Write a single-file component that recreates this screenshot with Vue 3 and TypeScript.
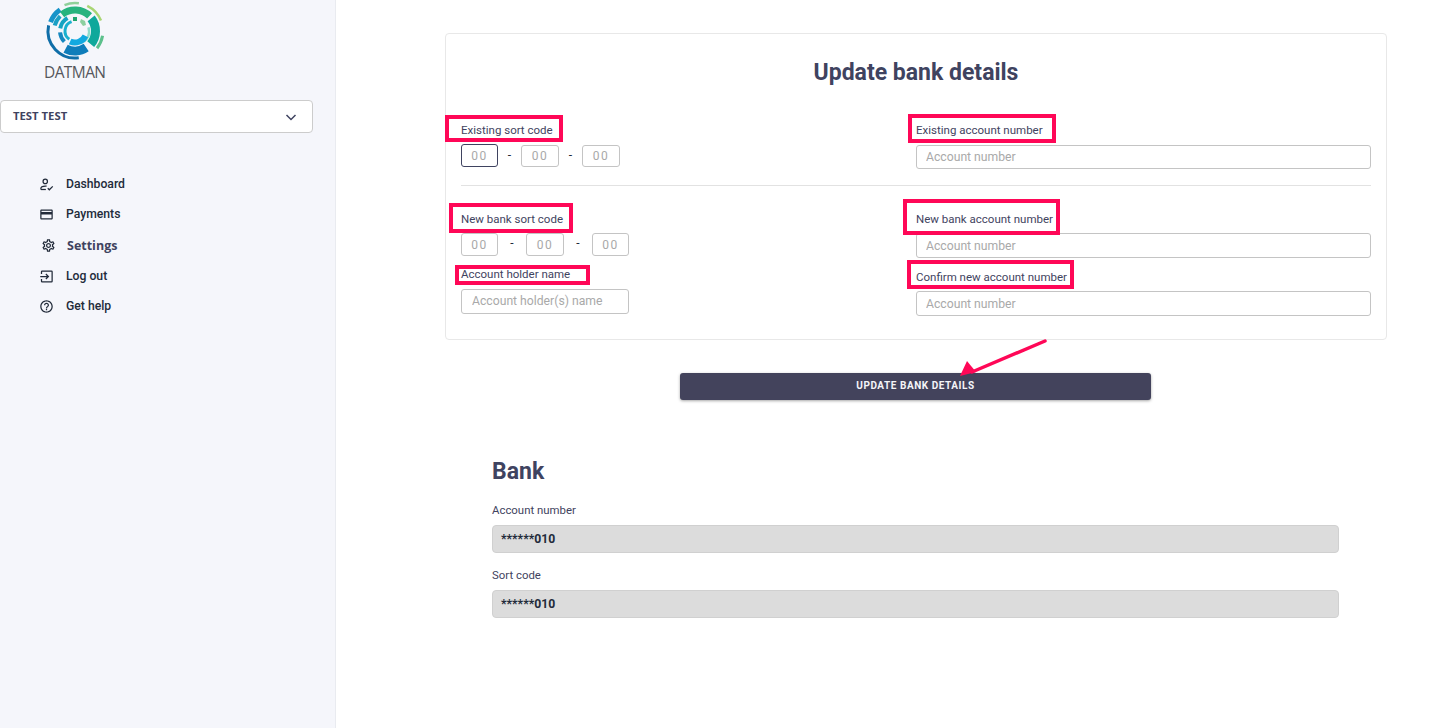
<template>
  <div class="page">
    <aside class="sidebar">
      <div class="brand">
        <svg class="logo" width="62" height="62" viewBox="-31 -31 62 62" fill="none">
          <path
            v-for="(seg, i) in logoArcs"
            :key="i"
            :d="arcPath(seg.r, seg.from, seg.to)"
            :stroke="seg.color"
            :stroke-width="seg.w"
          />
          <rect x="-2" y="-14" width="4" height="4" fill="#1fa56f" />
          <path d="M6-12l4 2 1 4-3 1-3-4z" fill="#8ccf9f" />
        </svg>
        <span class="brand-name">DATMAN</span>
      </div>

      <div class="merchant">
        <span>TEST TEST</span>
        <svg width="12" height="12" viewBox="0 0 12 12" fill="none" stroke="#3f4360" stroke-width="1.5">
          <path d="M1.5 4l4.5 4.5L10.500 4" />
        </svg>
      </div>

      <nav class="nav">
        <a class="nav-item">
          <svg class="nav-icon" viewBox="0 0 24 24" fill="none" stroke="#222b3a" stroke-width="2">
            <circle cx="10" cy="7" r="3.500" />
            <path d="M3 20v-1.500c0-2.500 3.500-4 7-4 .8 0 1.500.1 2.200.2" />
            <path d="M3 20h8" />
            <path d="M14 18l2.500 2.500L22 15" />
          </svg>
          <span>Dashboard</span>
        </a>
        <a class="nav-item">
          <svg class="nav-icon" viewBox="0 0 24 24" fill="#222b3a">
            <path d="M20 4H4c-1.110 0-1.990.89-1.990 2L2 18c0 1.110.89 2 2 2h16c1.110 0 2-.89 2-2V6c0-1.110-.89-2-2-2zm0 14H4v-6h16v6zm0-10H4V6h16v2z" />
          </svg>
          <span>Payments</span>
        </a>
        <a class="nav-item active">
          <svg class="nav-icon" viewBox="0 0 24 24" fill="#222b3a">
            <path d="M19.430 12.980c.04-.32.07-.64.07-.98 0-.34-.03-.66-.07-.98l2.110-1.650c.19-.15.24-.42.12-.64l-2-3.460c-.09-.16-.26-.25-.44-.25-.06 0-.12.01-.17.03l-2.490 1c-.52-.4-1.080-.73-1.690-.98l-.38-2.650C14.460 2.180 14.250 2 14 2h-4c-.25 0-.46.18-.49.42l-.38 2.650c-.61.25-1.170.59-1.690.98l-2.490-1c-.06-.02-.12-.03-.18-.03-.17 0-.34.09-.43.25l-2 3.460c-.13.22-.07.49.12.64l2.110 1.650c-.04.32-.07.65-.07.98 0 .33.03.66.07.98l-2.110 1.650c-.19.15-.24.42-.12.64l2 3.460c.09.16.26.25.44.25.06 0 .12-.01.17-.03l2.490-1c.52.4 1.080.73 1.690.98l.38 2.650c.03.24.24.42.49.42h4c.25 0 .46-.18.49-.42l.38-2.650c.61-.25 1.170-.59 1.690-.98l2.490 1c.06.02.12.03.18.03.17 0 .34-.09.43-.25l2-3.460c.12-.22.07-.49-.12-.64l-2.110-1.650zm-1.980-1.710c.04.31.05.52.05.73 0 .21-.02.43-.05.73l-.14 1.130.89.7 1.080.84-.7 1.210-1.270-.51-1.040-.42-.9.68c-.43.32-.84.56-1.250.73l-1.060.43-.16 1.130-.2 1.350h-1.400l-.19-1.350-.16-1.130-1.060-.43c-.43-.18-.83-.41-1.230-.71l-.91-.7-1.060.43-1.270.51-.7-1.210 1.080-.84.89-.7-.14-1.130c-.03-.31-.05-.54-.05-.74s.02-.43.05-.73l.14-1.130-.89-.7-1.080-.84.7-1.210 1.270.51 1.040.42.9-.68c.43-.32.84-.56 1.250-.73l1.060-.43.16-1.130.2-1.350h1.390l.19 1.350.16 1.130 1.060.43c.43.18.83.41 1.230.71l.91.7 1.060-.43 1.270-.51.7 1.210-1.070.85-.89.7.14 1.130zM12 8c-2.210 0-4 1.790-4 4s1.790 4 4 4 4-1.790 4-4-1.790-4-4-4zm0 6c-1.100 0-2-.9-2-2s.9-2 2-2 2 .9 2 2-.9 2-2 2z" />
          </svg>
          <span>Settings</span>
        </a>
        <a class="nav-item">
          <svg class="nav-icon" viewBox="0 0 24 24" fill="none" stroke="#222b3a" stroke-width="2">
            <path d="M4 8V4.500a1 1 0 0 1 1-1h15a1 1 0 0 1 1 1v15a1 1 0 0 1-1 1H5a1 1 0 0 1-1-1V16" />
            <path d="M2 12h13M11 8l4 4-4 4" />
          </svg>
          <span>Log out</span>
        </a>
        <a class="nav-item">
          <svg class="nav-icon" viewBox="0 0 24 24" fill="#222b3a">
            <path d="M11 18h2v-2h-2v2zm1-16C6.480 2 2 6.480 2 12s4.480 10 10 10 10-4.480 10-10S17.520 2 12 2zm0 18c-4.410 0-8-3.590-8-8s3.590-8 8-8 8 3.590 8 8-3.590 8-8 8zm0-14c-2.210 0-4 1.790-4 4h2c0-1.100.9-2 2-2s2 .9 2 2c0 2-3 1.750-3 5h2c0-2.250 3-2.500 3-5 0-2.210-1.790-4-4-4z" />
          </svg>
          <span>Get help</span>
        </a>
      </nav>
    </aside>

    <main class="content">
      <section class="card">
        <h1 class="title">Update bank details</h1>

        <div class="row first">
          <div>
            <label class="label">Existing sort code</label>
            <div class="sort">
              <input class="code focused" placeholder="00" />
              <span class="dash">-</span>
              <input class="code" placeholder="00" />
              <span class="dash">-</span>
              <input class="code" placeholder="00" />
            </div>
          </div>
          <div>
            <label class="label">Existing account number</label>
            <input class="text slim" placeholder="Account number" />
          </div>
        </div>

        <hr class="divider" />

        <div class="row">
          <div>
            <label class="label tight">New bank sort code</label>
            <div class="sort wide">
              <input class="code narrow" placeholder="00" />
              <span class="dash">-</span>
              <input class="code" placeholder="00" />
              <span class="dash">-</span>
              <input class="code narrow" placeholder="00" />
            </div>
            <label class="label holder">Account holder name</label>
            <input class="text short" placeholder="Account holder(s) name" />
          </div>
          <div>
            <label class="label tight">New bank account number</label>
            <input class="text" placeholder="Account number" />
            <label class="label confirm tight">Confirm new account number</label>
            <input class="text" placeholder="Account number" />
          </div>
        </div>

        <!-- review annotations drawn over the form -->
        <i class="mark m1"></i>
        <i class="mark m2"></i>
        <i class="mark m3"></i>
        <i class="mark m4"></i>
        <i class="mark m5"></i>
        <i class="mark m6"></i>
      </section>

      <div class="action">
        <button class="submit">UPDATE BANK DETAILS</button>
        <svg class="arrow" width="90" height="42" viewBox="0 0 90 42" fill="none">
          <path d="M85 2 L12 33" stroke="#ff0757" stroke-width="3.500" stroke-linecap="round" />
          <path d="M0 37 L7 22 L16 33 Z" fill="#ff0757" />
        </svg>
      </div>

      <section class="bank">
        <h2 class="bank-title">Bank</h2>
        <div class="bank-label">Account number</div>
        <div class="bank-value">******010</div>
        <div class="bank-label">Sort code</div>
        <div class="bank-value">******010</div>
      </section>
    </main>
  </div>
</template>

<script setup lang="ts">
interface LogoArc {
  r: number
  from: number
  to: number
  w: number
  color: string
}

const logoArcs: LogoArc[] = [
  { r: 28, from: -22, to: 8, w: 2.5, color: "#8fd09a" },
  { r: 28, from: 26, to: 68, w: 2.5, color: "#a9d574" },
  { r: 28, from: 100, to: 128, w: 3, color: "#5cc08c" },
  { r: 27, from: 172, to: 282, w: 3, color: "#0f6ea8" },
  { r: 26, from: 290, to: 325, w: 5, color: "#1693c9" },
  { r: 21, from: -38, to: 44, w: 7, color: "#27b37e" },
  { r: 20.5, from: 52, to: 130, w: 9, color: "#0fa89b" },
  { r: 20, from: 146, to: 208, w: 9, color: "#0f7dba" },
  { r: 21, from: 285, to: 315, w: 4, color: "#1a9fc4" },
  { r: 14, from: 75, to: 140, w: 2.5, color: "#8fdccb" },
  { r: 11.500, from: 115, to: 205, w: 6, color: "#12a9e0" },
  { r: 15, from: 225, to: 265, w: 4, color: "#1688c0" },
  { r: 15, from: 280, to: 330, w: 4, color: "#16a3c2" },
  { r: 10, from: 215, to: 340, w: 3, color: "#1ab0cf" },
]

// clockwise degrees from twelve o'clock
function arcPath(r: number, from: number, to: number): string {
  const point = (deg: number): string => {
    const rad = (deg * Math.PI) / 180
    return `${(Math.sin(rad) * r).toFixed(2)} ${(-Math.cos(rad) * r).toFixed(2)}`
  }
  const large = to - from > 180 ? 1 : 0
  return `M${point(from)}A${r} ${r} 0 ${large} 1 ${point(to)}`
}
</script>

<style>
html,
body {
  background: #fff;
  overflow: hidden;
}
</style>

<style scoped>
.page {
  display: flex;
  min-height: 728px;
  font-family: Roboto, "Liberation Sans", sans-serif;
  color: #3f4360;
}

.sidebar {
  width: 335px;
  flex-shrink: 0;
  background: #f5f6fb;
  border-right: 1px solid #e9ebf0;
}

.brand {
  display: flex;
  flex-direction: column;
  align-items: flex-start;
  padding-left: 44px;
  height: 100px;
}

.brand-name {
  font-family: "Open Sans", sans-serif;
  font-size: 15.500px;
  line-height: 16px;
  letter-spacing: -0.6px;
  color: #55575c;
  margin-top: 2px;
}

.merchant {
  display: flex;
  justify-content: space-between;
  align-items: center;
  box-sizing: border-box;
  width: 313px;
  height: 33px;
  padding: 0 15px 2px 12px;
  background: #fff;
  border: 1px solid #ccc;
  border-radius: 4px;
  font-family: "Open Sans", sans-serif;
  font-size: 11.300px;
  font-weight: 700;
  color: #3f4360;
}

.merchant svg {
  margin-top: 2px;
}

.nav {
  display: flex;
  flex-direction: column;
  margin-top: 36px;
  padding-left: 39px;
}

.nav-item {
  display: flex;
  align-items: center;
  gap: 12px;
  height: 30px;
  font-size: 12.200px;
  font-weight: 500;
  color: #222b3a;
}

.nav-item.active {
  height: 32px;
  padding-left: 2px;
  gap: 11px;
  font-family: "Open Sans", sans-serif;
  font-size: 12.500px;
  font-weight: 700;
  color: #3f4360;
}

.nav-icon {
  width: 15px;
  height: 15px;
  flex-shrink: 0;
}

.content {
  flex: 1;
  padding: 33px 0 0 109px;
}

.card {
  position: relative;
  box-sizing: border-box;
  width: 942px;
  height: 307px;
  padding: 26px 15px 0;
  border: 1px solid #e8e8e8;
  border-radius: 4px;
}

.title {
  margin: 0;
  text-align: center;
  font-size: 23px;
  line-height: 26px;
  font-weight: 700;
  color: #3f4360;
}

.row {
  display: grid;
  grid-template-columns: 455px 455px;
}

.row.first {
  margin-top: 36px;
}

.label {
  display: block;
  font-size: 11.500px;
  line-height: 16px;
  margin-bottom: 7px;
  color: #3f4360;
}

.label.tight {
  margin-bottom: 6px;
}

.label.holder {
  margin-top: 10px;
  margin-bottom: 7px;
}

.label.confirm {
  margin-top: 11px;
}

.sort {
  display: flex;
  align-items: flex-start;
  height: 22px;
}

.sort .dash {
  width: 23px;
}

.sort.wide {
  height: 23px;
}

.sort.wide .dash {
  width: 28px;
}

.sort.wide .code {
  height: 23px;
}

.sort.wide .code.narrow {
  width: 37px;
}

.dash {
  text-align: center;
  font-size: 12px;
  line-height: 20px;
  color: #222b3a;
}

input {
  box-sizing: border-box;
  display: block;
  background: #fff;
  border: 1px solid #c4c4c4;
  border-radius: 3px;
  font-family: Roboto, sans-serif;
  outline: none;
}

input::placeholder {
  color: #a9a9a9;
  opacity: 1;
}

.code {
  width: 38px;
  height: 22px;
  padding: 0;
  text-align: center;
  font-size: 12px;
  letter-spacing: 1.500px;
}

.code.focused {
  width: 37px;
  height: 23px;
  margin-top: -1px;
  border-color: #3f4360;
}

.text {
  width: 100%;
  height: 25px;
  padding: 0 9px;
  font-size: 12.200px;
}

.text.slim {
  height: 24px;
}

.text.short {
  width: 168px;
  padding: 0 10px 2px;
}

.divider {
  height: 1px;
  margin: 16px 0 25px;
  border: 0;
  background: #e2e2e2;
}

.mark {
  position: absolute;
  box-sizing: border-box;
  border: 4px solid #ff0757;
  pointer-events: none;
}

.m1 {
  left: -1px;
  top: 81px;
  width: 118px;
  height: 27px;
}

.m2 {
  left: 3px;
  top: 169px;
  width: 124px;
  height: 30px;
}

.m3 {
  left: 9px;
  top: 231px;
  width: 135px;
  height: 20px;
}

.m4 {
  left: 462px;
  top: 80px;
  width: 148px;
  height: 29px;
}

.m5 {
  left: 457px;
  top: 165px;
  width: 157px;
  height: 36px;
}

.m6 {
  left: 461px;
  top: 226px;
  width: 167px;
  height: 29px;
}

.action {
  position: relative;
  display: flex;
  justify-content: center;
  width: 941px;
  margin-top: 33px;
}

.submit {
  width: 471px;
  height: 27px;
  padding: 0 0 2px;
  border: 0;
  border-radius: 3px;
  background: #43435c;
  box-shadow: 0 1px 3px rgba(0, 0, 0, 0.35);
  color: #f5f5f8;
  font-family: Roboto, sans-serif;
  font-size: 10px;
  font-weight: 700;
  letter-spacing: 0.55px;
}

.arrow {
  position: absolute;
  left: 515px;
  top: -34px;
}

.bank {
  width: 847px;
  margin: 59px 0 0 47px;
}

.bank-title {
  margin: 0 0 17px;
  font-size: 23px;
  line-height: 26px;
  font-weight: 700;
  color: #3f4360;
}

.bank-label {
  font-size: 11.400px;
  line-height: 16px;
  margin-bottom: 7px;
  color: #3f4360;
}

.bank-value {
  box-sizing: border-box;
  height: 28px;
  margin-bottom: 14px;
  padding-left: 8px;
  background: #dcdcdc;
  border: 1px solid #d0d0d0;
  border-radius: 4px;
  font-size: 12.200px;
  font-weight: 700;
  line-height: 26px;
  color: #222b3a;
}
</style>
